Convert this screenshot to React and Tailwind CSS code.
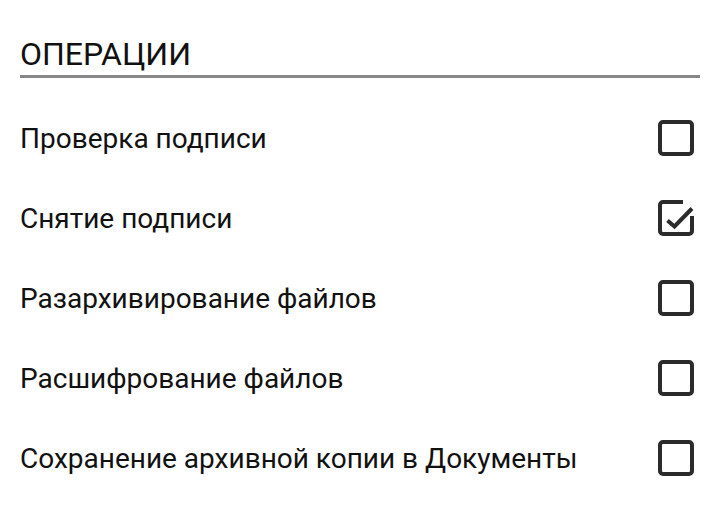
import React, { useState } from "react";

const operations = [
  { id: 1, label: "Проверка подписи", checked: false },
  { id: 2, label: "Снятие подписи", checked: true },
  { id: 3, label: "Разархивирование файлов", checked: false },
  { id: 4, label: "Расшифрование файлов", checked: false },
  { id: 5, label: "Сохранение архивной копии в Документы", checked: false },
];

const CheckBox = ({ checked, onClick }) => (
  <button onClick={onClick} className="mr-[6px] shrink-0">
    {checked ? (
      <svg width="36" height="36" viewBox="0 0 36 36" fill="none" stroke="#2b2b2b" strokeWidth="4">
        <path d="M25 2H5a3 3 0 0 0-3 3v26a3 3 0 0 0 3 3h26a3 3 0 0 0 3-3V16" />
        <path d="M9.5 20.5l7 6L34 8.5" strokeLinejoin="miter" />
      </svg>
    ) : (
      <svg width="36" height="36" viewBox="0 0 36 36" fill="none" stroke="#2b2b2b" strokeWidth="4">
        <rect x="2" y="2" width="32" height="32" rx="3" />
      </svg>
    )}
  </button>
);

const App = () => {
  const [items, setItems] = useState(operations);

  const toggle = (id) =>
    setItems(items.map((it) => (it.id === id ? { ...it, checked: !it.checked } : it)));

  return (
    <div className="w-[720px] h-[510px] bg-white px-5 font-['Roboto',sans-serif] text-[#111]">
      {/* Header */}
      <h1 className="pt-[38px] text-[32px] leading-[32px] mb-[5px]">ОПЕРАЦИИ</h1>
      <div className="h-[3px] bg-[#888]"></div>

      {/* Options */}
      <div className="pt-5">
        {items.map((it) => (
          <div key={it.id} className="h-20 flex items-center justify-between">
            <span className="text-[28px] leading-[28px] pt-[2px]">{it.label}</span>
            <CheckBox checked={it.checked} onClick={() => toggle(it.id)} />
          </div>
        ))}
      </div>
    </div>
  );
};

export default App;
